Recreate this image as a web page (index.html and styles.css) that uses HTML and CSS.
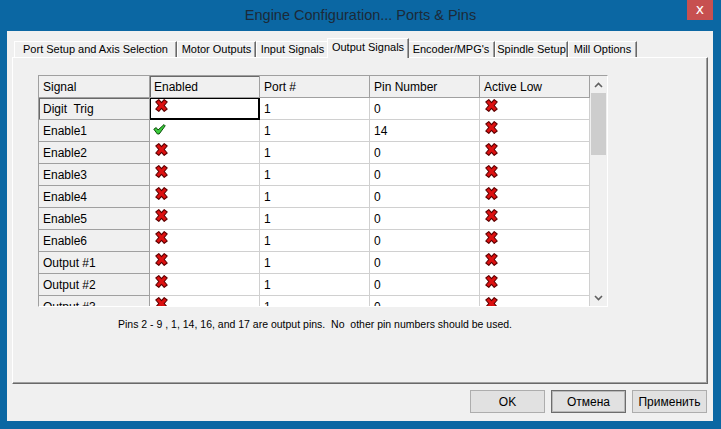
FILE: index.html
```html
<!DOCTYPE html>
<html>
<head>
<meta charset="utf-8">
<link rel="stylesheet" href="styles.css">
</head>
<body>
<div class="window">
  <div class="titlebar">
    <span></span>
    <span class="title">Engine Configuration... Ports &amp; Pins</span>
    <span class="close">x</span>
  </div>
  <div class="client">
    <div class="tabs">
      <div class="tab t1">Port Setup and Axis Selection</div>
      <div class="tab t2">Motor Outputs</div>
      <div class="tab t3">Input Signals</div>
      <div class="tab t4 sel">Output Signals</div>
      <div class="tab t5">Encoder/MPG's</div>
      <div class="tab t6">Spindle Setup</div>
      <div class="tab t7">Mill Options</div>
    </div>
    <div class="panel">
      <div class="grid">
        <div class="rows">
          <div class="row head">
            <div class="cell hc first">Signal</div>
            <div class="cell hc curcol">Enabled</div>
            <div class="cell hc">Port #</div>
            <div class="cell hc">Pin Number</div>
            <div class="cell hc">Active Low</div>
          </div>
          <div class="row">
            <div class="cell rh first currow">Digit  Trig</div>
            <div class="cell cur"><svg class="ico" viewBox="0 0 13 13"><polygon class="x" points="0.8,3 3.8,0.6 6.5,3.6 9.2,0.6 12.2,3 9.2,6.5 12.2,10 9.2,12.4 6.5,9.4 3.8,12.4 0.8,10 3.8,6.5"/></svg></div>
            <div class="cell">1</div>
            <div class="cell">0</div>
            <div class="cell"><svg class="ico" viewBox="0 0 13 13"><polygon class="x" points="0.8,3 3.8,0.6 6.5,3.6 9.2,0.6 12.2,3 9.2,6.5 12.2,10 9.2,12.4 6.5,9.4 3.8,12.4 0.8,10 3.8,6.5"/></svg></div>
          </div>
          <div class="row">
            <div class="cell rh first">Enable1</div>
            <div class="cell"><svg class="ico chk" viewBox="0 0 13 11"><polygon class="c" points="0.8,5.2 3.2,3.6 5,6 11,0.6 12.2,1.8 6.2,10 4.4,10"/></svg></div>
            <div class="cell">1</div>
            <div class="cell">14</div>
            <div class="cell"><svg class="ico" viewBox="0 0 13 13"><polygon class="x" points="0.8,3 3.8,0.6 6.5,3.6 9.2,0.6 12.2,3 9.2,6.5 12.2,10 9.2,12.4 6.5,9.4 3.8,12.4 0.8,10 3.8,6.5"/></svg></div>
          </div>
          <div class="row">
            <div class="cell rh first">Enable2</div>
            <div class="cell"><svg class="ico" viewBox="0 0 13 13"><polygon class="x" points="0.8,3 3.8,0.6 6.5,3.6 9.2,0.6 12.2,3 9.2,6.5 12.2,10 9.2,12.4 6.5,9.4 3.8,12.4 0.8,10 3.8,6.5"/></svg></div>
            <div class="cell">1</div>
            <div class="cell">0</div>
            <div class="cell"><svg class="ico" viewBox="0 0 13 13"><polygon class="x" points="0.8,3 3.8,0.6 6.5,3.6 9.2,0.6 12.2,3 9.2,6.5 12.2,10 9.2,12.4 6.5,9.4 3.8,12.4 0.8,10 3.8,6.5"/></svg></div>
          </div>
          <div class="row">
            <div class="cell rh first">Enable3</div>
            <div class="cell"><svg class="ico" viewBox="0 0 13 13"><polygon class="x" points="0.8,3 3.8,0.6 6.5,3.6 9.2,0.6 12.2,3 9.2,6.5 12.2,10 9.2,12.4 6.5,9.4 3.8,12.4 0.8,10 3.8,6.5"/></svg></div>
            <div class="cell">1</div>
            <div class="cell">0</div>
            <div class="cell"><svg class="ico" viewBox="0 0 13 13"><polygon class="x" points="0.8,3 3.8,0.6 6.5,3.6 9.2,0.6 12.2,3 9.2,6.5 12.2,10 9.2,12.4 6.5,9.4 3.8,12.4 0.8,10 3.8,6.5"/></svg></div>
          </div>
          <div class="row">
            <div class="cell rh first">Enable4</div>
            <div class="cell"><svg class="ico" viewBox="0 0 13 13"><polygon class="x" points="0.8,3 3.8,0.6 6.5,3.6 9.2,0.6 12.2,3 9.2,6.5 12.2,10 9.2,12.4 6.5,9.4 3.8,12.4 0.8,10 3.8,6.5"/></svg></div>
            <div class="cell">1</div>
            <div class="cell">0</div>
            <div class="cell"><svg class="ico" viewBox="0 0 13 13"><polygon class="x" points="0.8,3 3.8,0.6 6.5,3.6 9.2,0.6 12.2,3 9.2,6.5 12.2,10 9.2,12.4 6.5,9.4 3.8,12.4 0.8,10 3.8,6.5"/></svg></div>
          </div>
          <div class="row">
            <div class="cell rh first">Enable5</div>
            <div class="cell"><svg class="ico" viewBox="0 0 13 13"><polygon class="x" points="0.8,3 3.8,0.6 6.5,3.6 9.2,0.6 12.2,3 9.2,6.5 12.2,10 9.2,12.4 6.5,9.4 3.8,12.4 0.8,10 3.8,6.5"/></svg></div>
            <div class="cell">1</div>
            <div class="cell">0</div>
            <div class="cell"><svg class="ico" viewBox="0 0 13 13"><polygon class="x" points="0.8,3 3.8,0.6 6.5,3.6 9.2,0.6 12.2,3 9.2,6.5 12.2,10 9.2,12.4 6.5,9.4 3.8,12.4 0.8,10 3.8,6.5"/></svg></div>
          </div>
          <div class="row">
            <div class="cell rh first">Enable6</div>
            <div class="cell"><svg class="ico" viewBox="0 0 13 13"><polygon class="x" points="0.8,3 3.8,0.6 6.5,3.6 9.2,0.6 12.2,3 9.2,6.5 12.2,10 9.2,12.4 6.5,9.4 3.8,12.4 0.8,10 3.8,6.5"/></svg></div>
            <div class="cell">1</div>
            <div class="cell">0</div>
            <div class="cell"><svg class="ico" viewBox="0 0 13 13"><polygon class="x" points="0.8,3 3.8,0.6 6.5,3.6 9.2,0.6 12.2,3 9.2,6.5 12.2,10 9.2,12.4 6.5,9.4 3.8,12.4 0.8,10 3.8,6.5"/></svg></div>
          </div>
          <div class="row">
            <div class="cell rh first">Output #1</div>
            <div class="cell"><svg class="ico" viewBox="0 0 13 13"><polygon class="x" points="0.8,3 3.8,0.6 6.5,3.6 9.2,0.6 12.2,3 9.2,6.5 12.2,10 9.2,12.4 6.5,9.4 3.8,12.4 0.8,10 3.8,6.5"/></svg></div>
            <div class="cell">1</div>
            <div class="cell">0</div>
            <div class="cell"><svg class="ico" viewBox="0 0 13 13"><polygon class="x" points="0.8,3 3.8,0.6 6.5,3.6 9.2,0.6 12.2,3 9.2,6.5 12.2,10 9.2,12.4 6.5,9.4 3.8,12.4 0.8,10 3.8,6.5"/></svg></div>
          </div>
          <div class="row">
            <div class="cell rh first">Output #2</div>
            <div class="cell"><svg class="ico" viewBox="0 0 13 13"><polygon class="x" points="0.8,3 3.8,0.6 6.5,3.6 9.2,0.6 12.2,3 9.2,6.5 12.2,10 9.2,12.4 6.5,9.4 3.8,12.4 0.8,10 3.8,6.5"/></svg></div>
            <div class="cell">1</div>
            <div class="cell">0</div>
            <div class="cell"><svg class="ico" viewBox="0 0 13 13"><polygon class="x" points="0.8,3 3.8,0.6 6.5,3.6 9.2,0.6 12.2,3 9.2,6.5 12.2,10 9.2,12.4 6.5,9.4 3.8,12.4 0.8,10 3.8,6.5"/></svg></div>
          </div>
          <div class="row">
            <div class="cell rh first">Output #3</div>
            <div class="cell"><svg class="ico" viewBox="0 0 13 13"><polygon class="x" points="0.8,3 3.8,0.6 6.5,3.6 9.2,0.6 12.2,3 9.2,6.5 12.2,10 9.2,12.4 6.5,9.4 3.8,12.4 0.8,10 3.8,6.5"/></svg></div>
            <div class="cell">1</div>
            <div class="cell">0</div>
            <div class="cell"><svg class="ico" viewBox="0 0 13 13"><polygon class="x" points="0.8,3 3.8,0.6 6.5,3.6 9.2,0.6 12.2,3 9.2,6.5 12.2,10 9.2,12.4 6.5,9.4 3.8,12.4 0.8,10 3.8,6.5"/></svg></div>
          </div>
        </div>
        <div class="vscroll">
          <div class="arrow"><svg viewBox="0 0 9 6" class="chev"><polyline points="1,5 4.5,1.5 8,5"/></svg></div>
          <div class="thumb"></div>
          <div class="track"></div>
          <div class="arrow"><svg viewBox="0 0 9 6" class="chev"><polyline points="1,1 4.5,4.5 8,1"/></svg></div>
        </div>
      </div>
      <div class="note">Pins 2 - 9 , 1, 14, 16, and 17 are output pins.  No  other pin numbers should be used.</div>
    </div>
    <div class="buttons">
      <div class="btn">OK</div>
      <div class="btn focus">Отмена</div>
      <div class="btn">Применить</div>
    </div>
  </div>
</div>
</body>
</html>
```

FILE: styles.css
```css
html, body {
  margin: 0;
  padding: 0;
}
body {
  width: 721px;
  height: 429px;
  overflow: hidden;
  background: #0b67a3;
  font-family: "Liberation Sans", Arial, sans-serif;
  color: #000;
}
.window {
  display: flex;
  flex-direction: column;
  height: 429px;
}
.titlebar {
  height: 31px;
  display: grid;
  grid-template-columns: 1fr auto 1fr;
  align-items: start;
}
.title {
  font-size: 14.5px;
  color: #1c2a38;
  line-height: 30px;
}
.close {
  justify-self: end;
  margin-right: 8px;
  width: 26px;
  height: 20px;
  background: #c75050;
  color: #fff;
  font-size: 14px;
  font-family: "DejaVu Sans", sans-serif;
  line-height: 18px;
  text-align: center;
}
.client {
  margin: 0 8px 0 7px;
  height: 390px;
  background: #f0f0f0;
  padding: 10px 5px 0 5px;
  box-sizing: border-box;
}
.tabs {
  display: flex;
  align-items: flex-end;
  height: 16px;
  margin-left: 2px;
  font-size: 11px;
}
.tab {
  height: 16px;
  box-sizing: border-box;
  border-top: 1px solid #fff;
  border-left: 1px solid #fff;
  border-right: 1px solid #696969;
  box-shadow: inset -1px 0 0 #a0a0a0;
  text-align: center;
  line-height: 15px;
  white-space: nowrap;
}
.t1 { width: 163px; }
.t2 { width: 79px; }
.t3 { width: 73px; }
.t4 { width: 82px; }
.t5 { width: 88px; }
.t6 { width: 73px; }
.t7 { width: 69px; }
.tab.sel {
  height: 20px;
  margin: 0 -2px -1px -2px;
  width: 82px;
  background: #f0f0f0;
  position: relative;
  z-index: 1;
  line-height: 17px;
}
.panel {
  width: 696px;
  height: 327px;
  box-sizing: border-box;
  border-top: 1px solid #fff;
  border-left: 1px solid #fff;
  border-right: 1px solid #696969;
  border-bottom: 1px solid #696969;
  box-shadow: inset -1px -1px 0 #a0a0a0;
  padding: 17px 0 0 25px;
}
.grid {
  width: 570px;
  height: 232px;
  box-sizing: border-box;
  border-top: 1px solid #a0a0a0;
  border-left: 1px solid #a0a0a0;
  border-bottom: 1px solid #fff;
  border-right: 1px solid #fff;
  display: flex;
  background: #f0f0f0;
}
.rows {
  width: 551px;
  height: 230px;
  overflow: hidden;
  background: #f0f0f0;
}
.row {
  display: flex;
  height: 22px;
}
.cell {
  width: 110px;
  height: 22px;
  box-sizing: border-box;
  border-right: 1px solid #d0d0d0;
  border-bottom: 1px solid #d0d0d0;
  background: #fff;
  font-size: 12px;
  padding-left: 4px;
  display: flex;
  align-items: center;
  white-space: pre;
}
.cell.first { width: 111px; }
.cell.hc, .cell.rh {
  background: #f0f0f0;
  border-right: 1px solid #a0a0a0;
  border-bottom: 1px solid #a0a0a0;
}
.cell.curcol {
  box-shadow: inset 1px 1px 0 #696969;
}
.cell.currow {
  box-shadow: inset 1px 1px 0 #696969;
}
.cell.cur {
  box-shadow: inset 0 0 0 1px #000;
  border-right-color: #000;
  border-bottom-color: #000;
}
.ico {
  width: 13px;
  height: 13px;
  align-self: flex-start;
  margin-top: 1px;
  margin-left: 1px;
}
.ico.chk {
  height: 11px;
  margin-top: 4px;
  margin-left: -1px;
}
.x {
  fill: #dd1010;
  stroke: #5c0000;
  stroke-width: 1.1;
  stroke-linejoin: round;
}
.c {
  fill: #3ccc3c;
  stroke: #0b4d0b;
  stroke-width: 1;
  stroke-linejoin: round;
}
.vscroll {
  width: 17px;
  height: 230px;
  display: flex;
  flex-direction: column;
  background: #f0f0f0;
}
.arrow {
  height: 17px;
  display: flex;
  align-items: center;
  justify-content: center;
}
.chev {
  width: 9px;
  height: 6px;
}
.chev polyline {
  fill: none;
  stroke: #606060;
  stroke-width: 1.6;
}
.thumb {
  height: 62px;
  margin: 0 1px;
  background: #cdcdcd;
}
.track {
  flex: 1;
}
.note {
  margin-top: 10px;
  margin-left: 80px;
  font-size: 10.5px;
  white-space: pre;
  line-height: 14px;
}
.buttons {
  display: flex;
  justify-content: flex-end;
  gap: 6px;
  margin-top: 6px;
  margin-right: 1px;
}
.btn {
  width: 75px;
  height: 23px;
  box-sizing: border-box;
  border: 1px solid #adadad;
  background: #e1e1e1;
  font-size: 12px;
  display: flex;
  align-items: center;
  justify-content: center;
}
.btn.focus {
  border-color: #6d6d6d;
  box-shadow: inset 0 0 0 1px #b8b8b8;
}
```
